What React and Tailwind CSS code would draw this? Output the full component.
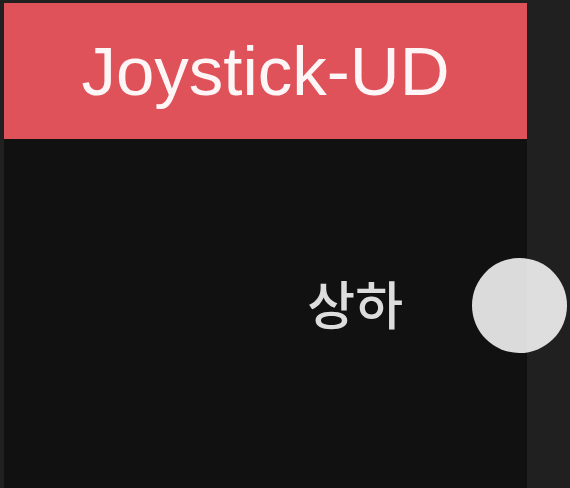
export default function App() {
  return (
    <div className="h-[488px] w-[570px] overflow-hidden bg-[#202020] pl-[4px] pt-[3px]">
      <div className="flex h-[485px] w-[523px] flex-col">
        <div className="flex h-[136px] items-center justify-center bg-[#e05259]">
          <h1 className="font-['Liberation_Sans',Arial,sans-serif] text-[69px] leading-none text-white/95">
            Joystick-UD
          </h1>
        </div>
        <div className="flex-1 bg-[#111111] pt-[119px]">
          <div className="relative flex h-[95px] items-center justify-end pr-[124px]">
            <span className="mb-[5px] font-['Noto_Sans_CJK_KR',sans-serif] text-[52px] font-medium leading-none text-[#dddddd]">
              상하
            </span>
            <div className="absolute right-[-40px] top-0 h-[95px] w-[95px] rounded-full bg-white/85" />
          </div>
        </div>
      </div>
    </div>
  );
}
